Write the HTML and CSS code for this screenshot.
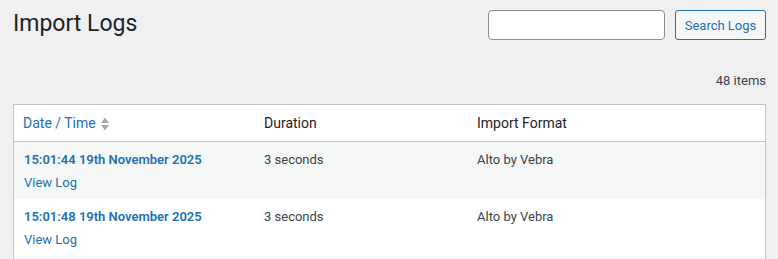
FILE: index.html
```html
<!DOCTYPE html>
<html>
<head>
<meta charset="utf-8">
<link rel="stylesheet" href="styles.css">
</head>
<body>
<div class="wrap">
  <div class="top">
    <h1 class="title">Import Logs</h1>
    <form class="search">
      <input class="search-input" type="text">
      <button class="btn" type="button">Search Logs</button>
    </form>
  </div>
  <div class="tablenav">
    <span class="count">48 items</span>
  </div>
  <table class="list">
    <thead>
      <tr>
        <th class="col-date"><a class="sort" href="#">Date / Time
          <span class="sort-icon">
            <svg width="10" height="16" viewBox="0 0 10 16"><path d="M1 7 L5 1.5 L9 7 Z" fill="#a7aaad"/><path d="M1 9 L5 14.5 L9 9 Z" fill="#a7aaad"/></svg>
          </span></a></th>
        <th class="col-dur">Duration</th>
        <th class="col-fmt">Import Format</th>
      </tr>
    </thead>
    <tbody>
      <tr class="alt">
        <td><a class="strong" href="#">15:01:44 19th November 2025</a><div class="row-actions"><a href="#">View Log</a></div></td>
        <td>3 seconds</td>
        <td>Alto by Vebra</td>
      </tr>
      <tr>
        <td><a class="strong" href="#">15:01:48 19th November 2025</a><div class="row-actions"><a href="#">View Log</a></div></td>
        <td>3 seconds</td>
        <td>Alto by Vebra</td>
      </tr>
      <tr class="alt spacer">
        <td></td>
        <td></td>
        <td></td>
      </tr>
    </tbody>
  </table>
</div>
</body>
</html>
```
FILE: styles.css
```css
html, body {
  margin: 0;
  padding: 0;
  background: #f0f0f1;
  color: #3c434a;
  font-family: Roboto, "Liberation Sans", sans-serif;
  font-size: 13px;
  line-height: 1.4;
}
.wrap {
  padding: 0 12px 0 13px;
}
.top {
  display: flex;
  justify-content: space-between;
  align-items: flex-start;
}
.title {
  margin: 0;
  padding-top: 9px;
  font-size: 23px;
  font-weight: 400;
  line-height: 1.3;
  color: #1d2327;
}
.search {
  display: flex;
  gap: 10px;
  margin: 10px 0 0;
}
.search-input {
  box-sizing: border-box;
  width: 177px;
  height: 30px;
  border: 1px solid #8c8f94;
  border-radius: 4px;
  background: #fff;
  margin: 0;
}
.btn {
  box-sizing: border-box;
  width: 91px;
  height: 30px;
  border: 1px solid #2271b1;
  border-radius: 3px;
  background: #f6f7f7;
  color: #2271b1;
  font-family: inherit;
  font-size: 13px;
  padding: 0 8px;
  margin: 0;
}
.tablenav {
  display: flex;
  justify-content: flex-end;
  align-items: center;
  height: 30px;
  margin-top: 26px;
  margin-bottom: 8px;
}
.count {
  font-size: 13px;
}
.list {
  width: 100%;
  border-collapse: collapse;
  background: #fff;
  border: 1px solid #c3c4c7;
  table-layout: fixed;
}
.list th {
  text-align: left;
  font-weight: 400;
  font-size: 14px;
  color: #1d2327;
  padding: 9px 10px 7px;
  height: 20px;
  border-bottom: 1px solid #c3c4c7;
  line-height: 1.4;
}
.col-date { width: 221px; }
.col-dur { width: 193px; }
.list th.col-date { padding-left: 9px; }
.sort {
  color: #2271b1;
  text-decoration: none;
  display: inline-flex;
  align-items: center;
  gap: 4px;
}
.sort-icon {
  display: inline-flex;
  align-items: center;
}
.list td {
  vertical-align: top;
  padding: 8px 10px 7px;
  font-size: 13px;
  line-height: 1.5;
}
.list tr.alt td {
  background: #f6f7f7;
}
.list tr.spacer td {
  height: 20px;
}
.list a {
  color: #2271b1;
  text-decoration: none;
}
.strong {
  font-weight: 600;
}
.row-actions {
  padding-top: 3px;
}
```
